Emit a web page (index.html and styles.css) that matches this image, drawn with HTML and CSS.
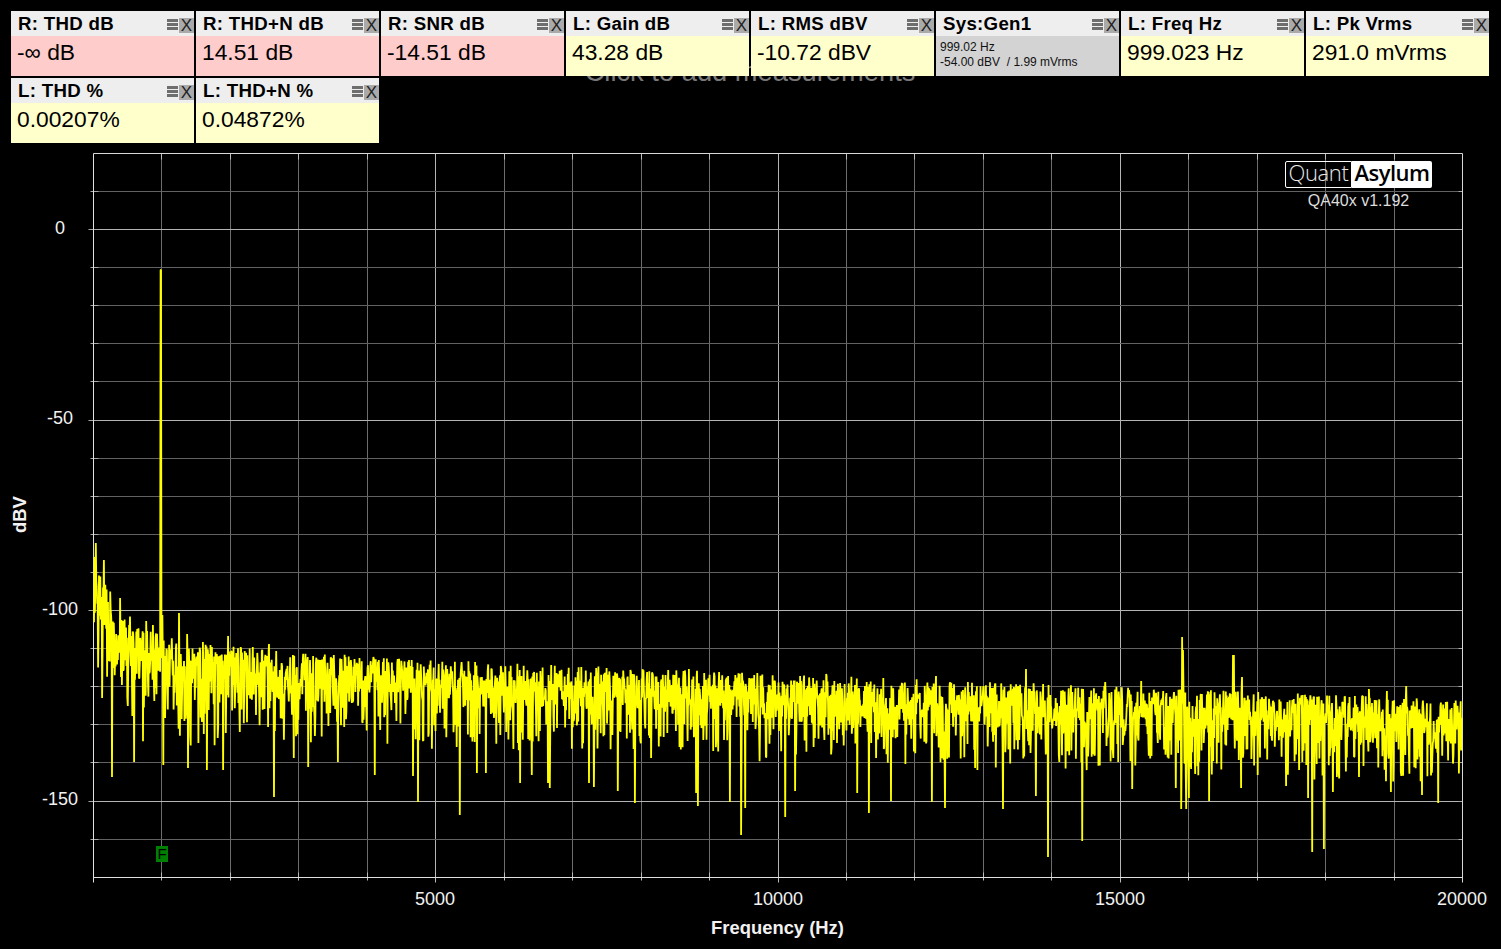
FILE: index.html
```html
<!DOCTYPE html>
<html lang="en">
<head>
<meta charset="utf-8">
<title>QA40x</title>
<link rel="stylesheet" href="styles.css">
</head>
<body>
<div class="app">
  <div class="hint">Click to add measurements</div>
  <div class="tiles">
    <div class="tile pink"><div class="head"><span class="name">R: THD dB</span><span class="menu"><i></i><i></i><i></i></span><span class="close">X</span></div><div class="value">-∞ dB</div></div>
    <div class="tile pink"><div class="head"><span class="name">R: THD+N dB</span><span class="menu"><i></i><i></i><i></i></span><span class="close">X</span></div><div class="value">14.51 dB</div></div>
    <div class="tile pink"><div class="head"><span class="name">R: SNR dB</span><span class="menu"><i></i><i></i><i></i></span><span class="close">X</span></div><div class="value">-14.51 dB</div></div>
    <div class="tile"><div class="head"><span class="name">L: Gain dB</span><span class="menu"><i></i><i></i><i></i></span><span class="close">X</span></div><div class="value">43.28 dB</div></div>
    <div class="tile"><div class="head"><span class="name">L: RMS dBV</span><span class="menu"><i></i><i></i><i></i></span><span class="close">X</span></div><div class="value">-10.72 dBV</div></div>
    <div class="tile grey"><div class="head"><span class="name">Sys:Gen1</span><span class="menu"><i></i><i></i><i></i></span><span class="close">X</span></div><div class="value small">999.02 Hz
-54.00 dBV  / 1.99 mVrms</div></div>
    <div class="tile"><div class="head"><span class="name">L: Freq Hz</span><span class="menu"><i></i><i></i><i></i></span><span class="close">X</span></div><div class="value">999.023 Hz</div></div>
    <div class="tile"><div class="head"><span class="name">L: Pk Vrms</span><span class="menu"><i></i><i></i><i></i></span><span class="close">X</span></div><div class="value">291.0 mVrms</div></div>
    <div class="tile"><div class="head"><span class="name">L: THD %</span><span class="menu"><i></i><i></i><i></i></span><span class="close">X</span></div><div class="value">0.00207%</div></div>
    <div class="tile"><div class="head"><span class="name">L: THD+N %</span><span class="menu"><i></i><i></i><i></i></span><span class="close">X</span></div><div class="value">0.04872%</div></div>
  </div>
  <div class="chart">
    <svg id="plot" class="plot" viewBox="0 143 1501 806" xmlns="http://www.w3.org/2000/svg"></svg>
    <div class="brand">
      <div class="logo"><span class="quant">Quant</span><span class="asylum">Asylum</span></div>
      <div class="version">QA40x v1.192</div>
    </div>
  </div>
</div>
<script src="chart.js"></script>
</body>
</html>
```
FILE: styles.css
```css
* { box-sizing: border-box; }
html, body { margin: 0; padding: 0; background: #000; }
body { width: 1501px; height: 949px; overflow: hidden; font-family: "Liberation Sans", Arial, sans-serif; }
.app { position: relative; width: 1501px; height: 949px; display: flex; flex-direction: column; }

.hint { position: absolute; top: 56px; left: 0; width: 1500px; text-align: center; font-size: 27.3px; line-height: 31px; color: #7a7a7a; }

.tiles { position: relative; height: 143px; padding: 11px 0 0 11px; display: flex; flex-wrap: wrap; align-content: flex-start; gap: 2px; }
.tile { width: 183px; height: 65px; display: flex; flex-direction: column; background: #ffffcc; color: #000; }
.tile.pink { background: #ffcccc; }
.tile.grey { background: #d3d3d3; }

.head { height: 25px; background: #eeeeee; display: flex; align-items: flex-start; padding-left: 7px; }
.name { flex: 1; font-size: 18.67px; font-weight: 700; line-height: 25px; letter-spacing: 0.3px; white-space: nowrap; }
.menu { width: 11px; margin-top: 8px; display: flex; flex-direction: column; gap: 1px; }
.menu i { display: block; height: 3px; background: #6e6e6e; }
.close { width: 15px; height: 15px; margin: 7px 0 0 1px; background: #aaaaaa; color: #222; font-size: 17px; line-height: 16px; text-align: center; }

.value { padding-left: 6px; font-size: 22.8px; line-height: 33px; white-space: nowrap; }
.value.small { padding: 4px 0 0 4px; font-size: 12px; line-height: 15px; white-space: pre; color: #111; }

.chart { position: relative; flex: 1; }
.plot { display: block; width: 1501px; height: 806px; }
.axis-label { fill: #f2f2f2; font-family: "Liberation Sans", Arial, sans-serif; font-size: 18px; }
.axis-title { fill: #f2f2f2; font-family: "Liberation Sans", Arial, sans-serif; font-size: 18.4px; font-weight: 700; }
.marker-letter { fill: #000; font-family: "Liberation Sans", Arial, sans-serif; font-size: 15px; }

.brand { position: absolute; top: 18px; left: 1285px; width: 147px; display: flex; flex-direction: column; align-items: center; }
.logo { width: 147px; height: 27px; display: flex; font-family: "Open Sans", sans-serif; font-size: 22px; line-height: 21px; }
.quant { width: 67px; border: 1px solid #fff; border-radius: 2px 0 0 2px; color: #e8e8e8; font-weight: 300; text-align: center; letter-spacing: -0.4px; }
.asylum { flex: 1; background: #fff; border-radius: 0 2px 2px 0; color: #000; font-weight: 600; text-align: center; letter-spacing: -0.5px; line-height: 23px; }
.version { margin-top: 3px; font-size: 16px; line-height: 20px; color: #dddddd; }
```
FILE: chart.js
```js
(function () {
  var NS = 'http://www.w3.org/2000/svg';
  var svg = document.getElementById('plot');
  var L = 93.5, R = 1462.5, T = 153.5, B = 877.5;
  var PX_HZ = 0.06845, PX_DB = 3.81, Y0 = 229.5;

  function el(name, attrs, text) {
    var e = document.createElementNS(NS, name);
    for (var k in attrs) e.setAttribute(k, attrs[k]);
    if (text) e.textContent = text;
    svg.appendChild(e);
    return e;
  }
  function line(x1, y1, x2, y2, c) {
    el('line', { x1: x1, y1: y1, x2: x2, y2: y2, stroke: c, 'stroke-width': 1 });
  }

  // Grid
  var hz, db, x, y, major;
  for (hz = 1000; hz < 20000; hz += 1000) {
    x = Math.round(L - 0.5 + hz * PX_HZ) + 0.5;
    major = hz % 5000 === 0;
    line(x, T, x, B, major ? '#b4b4b4' : '#6c6c6c');
    line(x, T, x, T + 6, '#bbb');
    line(x, B - 5, x, B + (major ? 5 : 3), '#bbb');
  }
  for (db = 10; db > -170; db -= 10) {
    y = Math.round(Y0 - 0.5 - db * PX_DB) + 0.5;
    major = db % 50 === 0;
    line(L, y, R, y, major ? '#b4b4b4' : '#626262');
    line(L - (major ? 5 : 3), y, L + 5, y, '#aaa');
    line(R - 4, y, R, y, '#aaa');
  }
  line(L, T, R, T, '#d8d8d8');
  line(L, B, R, B, '#e0e0e0');
  line(L, T, L, B + 5, '#e0e0e0');
  line(R, T, R, B + 5, '#d8d8d8');

  // Axis labels
  [[0, 228], [-50, 418], [-100, 609], [-150, 799]].forEach(function (p) {
    el('text', { x: 60, y: p[1] + 6, 'text-anchor': 'middle', 'class': 'axis-label' }, String(p[0]));
  });
  [[5000, 435], [10000, 778], [15000, 1120], [20000, 1462]].forEach(function (p) {
    el('text', { x: p[1], y: 905, 'text-anchor': 'middle', 'class': 'axis-label' }, String(p[0]));
  });
  el('text', { x: 777.5, y: 934, 'text-anchor': 'middle', 'class': 'axis-title' }, 'Frequency (Hz)');
  el('text', { transform: 'translate(26 514.5) rotate(-90)', 'text-anchor': 'middle', 'class': 'axis-title' }, 'dBV');

  // Spectrum: seeded noise following the measured floor, with the visible peaks and nulls placed by hand
  var seed = 40217;
  function rnd() {
    seed = (seed * 1664525 + 1013904223) >>> 0;
    return (seed + 0.5) / 4294967296;
  }
  function floor(px) {
    return 679 + (px - 94) * 0.0375 - 72 * Math.exp(-(px - 94) / 20) - 14 * Math.exp(-(px - 94) / 90);
  }
  var STEP = 0.45, pts = [], px;
  for (px = 94; px <= 1462; px += STEP) {
    var v = 10 * Math.log10(-Math.log(rnd())) + 2.5;
    var d = -v * PX_DB * 1.12;
    var wide = 1 + 0.5 * Math.exp(-(px - 94) / 120);
    if (d > 55) d = 34 + rnd() * 24;
    if (d < -31) d = -22 - rnd() * 9;
    pts.push([px, floor(px) + d * wide]);
  }
  var spikes = [
    [96, 543], [104, 560], [112, 578], [120, 598], [129, 625], [146, 621], [153, 625],
    [179, 613], [187, 634], [203, 642], [212, 647], [228, 636], [253, 647], [269, 644], [293, 655], [334, 655],
    [631, 672], [689, 669], [719, 672], [800, 676], [826, 674], [936, 676],
    [1026, 669], [1105, 682], [1141, 681], [1182, 637], [1183, 650], [1233, 655], [1234, 655], [1242, 677],
    [1369, 689], [1387, 691], [1406, 686],
    [112, 777], [134, 762], [188, 768], [207, 770], [223, 770], [274, 797], [294, 758], [308, 767],
    [338, 762], [375, 775], [413, 776], [418, 802], [460, 815], [477, 773], [486, 773], [520, 783], [532, 775], [548, 783],
    [550, 788], [589, 783], [594, 787], [618, 791], [635, 803], [696, 793], [698, 806], [730, 802], [741, 835], [745, 808],
    [785, 817], [795, 791], [857, 793], [869, 813], [891, 801], [932, 802], [945, 808], [1003, 809],
    [1036, 796], [1048, 857], [1082, 841], [1132, 789], [1176, 788], [1181, 809], [1186, 809], [1189, 798], [1209, 801],
    [1241, 788], [1286, 786], [1308, 798], [1312, 852], [1324, 849], [1333, 792], [1391, 792], [1422, 795], [1438, 803],
    [160.6, 270], [161.1, 270], [162.4, 615], [163.2, 765]
  ];
  spikes.forEach(function (s) {
    var i = Math.max(0, Math.min(pts.length - 1, Math.round((s[0] - 94) / STEP)));
    pts[i][1] = s[1];
  });
  var dPath = pts.map(function (p, i) {
    return (i ? 'L' : 'M') + p[0].toFixed(1) + ' ' + p[1].toFixed(1);
  }).join('');
  el('path', { d: dPath, fill: 'none', stroke: '#ffff00', 'stroke-width': 1.8, 'stroke-linejoin': 'bevel' });

  // Fundamental marker
  el('rect', { x: 156, y: 846, width: 12, height: 16, fill: '#008000' });
  el('text', { x: 162, y: 859, 'text-anchor': 'middle', 'class': 'marker-letter' }, 'F');
})();
```
